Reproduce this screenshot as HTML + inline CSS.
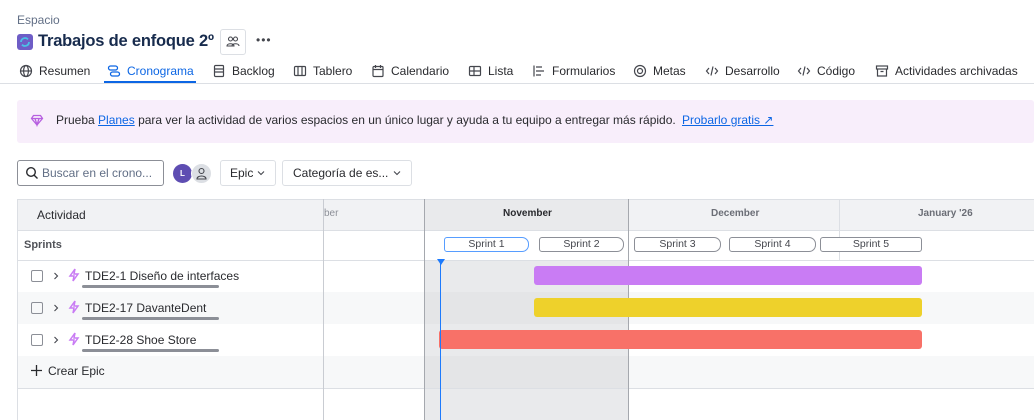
<!DOCTYPE html>
<html><head><meta charset="utf-8"><style>
*{box-sizing:border-box;margin:0;padding:0}
body{width:1034px;height:420px;overflow:hidden;background:#fff;font-family:"Liberation Sans",sans-serif;color:#292a2e;position:relative;font-size:12px}
.a{position:absolute}
.tab{position:absolute;top:64px;font-size:12px;color:#292a2e;display:flex;align-items:center;gap:6px;white-space:nowrap}
.tab svg{width:14px;height:14px}
.hl{position:absolute;left:17px;right:0;height:1px;background:#dcdfe4}
.vl{position:absolute;width:1px;background:#c9ccd2}
.sp{position:absolute;top:237px;height:15px;border:1px solid #8c8f97;border-radius:3px 7px 7px 3px;background:#fff;font-size:10.5px;text-align:center;line-height:13px;color:#44464d}
.row{position:absolute;left:17px;right:0;height:32px}
.cb{position:absolute;left:31px;width:12px;height:12px;border:1px solid #8c8f97;border-radius:2px}
.lab{position:absolute;left:85px;font-size:12px;color:#292a2e}
.ul{position:absolute;left:82px;width:137px;height:3px;background:#8c8f97;border-radius:2px}
.chev{position:absolute;left:52px}
.bolt{position:absolute;left:68px}
.bar{position:absolute;height:19px;border-radius:3px}
</style></head><body>
<div class="a" style="left:17px;top:13px;font-size:12px;color:#626f86">Espacio</div>
<div class="a" style="left:17px;top:34px;width:16px;height:16px;background:#6e5dc6;border-radius:3px"><svg width="16" height="16" viewBox="0 0 16 16"><path d="M4 8a4 4 0 0 1 7-2.6M12 8a4 4 0 0 1-7 2.6" stroke="#4bc0e6" stroke-width="1.8" fill="none"/></svg></div>
<div class="a" style="left:38px;top:32px;font-size:16.5px;font-weight:bold;color:#172b4d;letter-spacing:-0.2px">Trabajos de enfoque 2º</div>
<div class="a" style="left:220px;top:29px;width:26px;height:26px;border:1px solid #dcdfe4;border-radius:3px"><svg width="24" height="24" viewBox="0 0 24 24" fill="none" stroke="#44464d" stroke-width="1.1"><circle cx="9.5" cy="9" r="2"/><circle cx="14.5" cy="9" r="2"/><path d="M6 16c0-3 7-3 7 0zM11 16c0-3 7-3 7 0"/></svg></div>
<div class="a" style="left:256px;top:33px;font-size:12px;letter-spacing:1px;color:#44464d">•••</div>

<div class="tab" style="left:19px"><svg viewBox="0 0 14 14" fill="none" stroke="#44464d" stroke-width="1.2"><circle cx="7" cy="7" r="5.5"/><ellipse cx="7" cy="7" rx="2.4" ry="5.5"/><path d="M1.5 7h11"/></svg>Resumen</div>
<div class="tab" style="left:107px;color:#0c66e4"><svg viewBox="0 0 14 14" fill="none" stroke="#0c66e4" stroke-width="1.3"><rect x="1.5" y="2" width="9" height="4" rx="2"/><rect x="3.5" y="8" width="9" height="4" rx="2"/></svg>Cronograma</div>
<div class="a" style="left:104px;top:81px;width:92px;height:2px;background:#0c66e4"></div>
<div class="tab" style="left:212px"><svg viewBox="0 0 14 14" fill="none" stroke="#44464d" stroke-width="1.2"><rect x="2.5" y="1.5" width="9" height="11" rx="1"/><path d="M2.5 5h9M2.5 8h9"/></svg>Backlog</div>
<div class="tab" style="left:293px"><svg viewBox="0 0 14 14" fill="none" stroke="#44464d" stroke-width="1.2"><rect x="1.5" y="2.5" width="11" height="9" rx="1"/><path d="M5 2.5v9M9 2.5v9"/></svg>Tablero</div>
<div class="tab" style="left:371px"><svg viewBox="0 0 14 14" fill="none" stroke="#44464d" stroke-width="1.2"><rect x="2" y="2.5" width="10" height="10" rx="1"/><path d="M2 5.5h10M4.5 1v3M9.5 1v3"/></svg>Calendario</div>
<div class="tab" style="left:468px"><svg viewBox="0 0 14 14" fill="none" stroke="#44464d" stroke-width="1.2"><rect x="1.5" y="2.5" width="11" height="9" rx="1"/><path d="M1.5 7h11M6 2.5v9"/></svg>Lista</div>
<div class="tab" style="left:532px"><svg viewBox="0 0 14 14" fill="none" stroke="#44464d" stroke-width="1.2"><path d="M2 1.5v11M4 3h6M4 7h8M4 11h5"/></svg>Formularios</div>
<div class="tab" style="left:633px"><svg viewBox="0 0 14 14" fill="none" stroke="#44464d" stroke-width="1.2"><circle cx="7" cy="7" r="5.5"/><circle cx="7" cy="7" r="2.5"/></svg>Metas</div>
<div class="tab" style="left:705px"><svg viewBox="0 0 14 14" fill="none" stroke="#44464d" stroke-width="1.2"><path d="M4 4L1.5 7 4 10M10 4l2.5 3L10 10M8 2.5L6 11.5"/></svg>Desarrollo</div>
<div class="tab" style="left:797px"><svg viewBox="0 0 14 14" fill="none" stroke="#44464d" stroke-width="1.2"><path d="M4 4L1.5 7 4 10M10 4l2.5 3L10 10M8 2.5L6 11.5"/></svg>Código</div>
<div class="tab" style="left:875px"><svg viewBox="0 0 14 14" fill="none" stroke="#44464d" stroke-width="1.2"><rect x="1.5" y="2" width="11" height="3"/><path d="M2.5 5v7h9V5M5.5 7.5h3"/></svg>Actividades archivadas</div>
<div class="a" style="left:0;right:0;top:83px;height:1px;background:#dcdfe4"></div>

<div class="a" style="left:17px;top:100px;width:1017px;height:43px;background:#f8eefb;border-radius:3px"></div>
<div class="a" style="left:30px;top:113px"><svg width="14" height="14" viewBox="0 0 14 14" fill="none" stroke="#b760e0" stroke-width="1.3"><path d="M3.5 2.5h7l2 3L7 12 1.5 5.5z"/><path d="M1.5 5.5h11M5 5.5L7 12l2-6.5"/></svg></div>
<div class="a" style="left:56px;top:113px;font-size:12px;color:#292a2e">Prueba <span style="color:#0c66e4;text-decoration:underline">Planes</span> para ver la actividad de varios espacios en un único lugar y ayuda a tu equipo a entregar más rápido.</div>
<div class="a" style="left:682px;top:113px;font-size:12px;color:#0c66e4;text-decoration:underline">Probarlo gratis ↗</div>

<div class="a" style="left:17px;top:160px;width:147px;height:26px;border:1px solid #8c8f97;border-radius:3px"></div>
<div class="a" style="left:25px;top:166px"><svg width="14" height="14" viewBox="0 0 14 14" fill="none" stroke="#292a2e" stroke-width="1.4"><circle cx="6" cy="6" r="4.3"/><path d="M9.2 9.2L12.5 12.5"/></svg></div>
<div class="a" style="left:42px;top:166px;font-size:12px;color:#626f86">Buscar en el crono...</div>
<div class="a" style="left:173px;top:164px;width:19px;height:19px;border-radius:50%;background:#5e4db2;color:#fff;font-size:8px;text-align:center;line-height:19px;font-weight:bold">L</div>
<div class="a" style="left:191px;top:163px;width:21px;height:21px;border-radius:50%;background:#dcdfe4;border:1px solid #fff"><svg width="19" height="19" viewBox="0 0 19 19" fill="none" stroke="#44464d" stroke-width="1.1"><circle cx="9.5" cy="7" r="2.5"/><path d="M5 15c0-4 9-4 9 0z"/></svg></div>
<div class="a" style="left:220px;top:160px;width:56px;height:26px;border:1px solid #dcdfe4;border-radius:3px;font-size:12px;padding:5px 0 0 9px">Epic</div>
<svg class="a" style="left:256px;top:169px" width="10" height="8" viewBox="0 0 10 8" fill="none" stroke="#44464d" stroke-width="1.1"><path d="M2 2.5l3 3 3-3"/></svg>
<div class="a" style="left:282px;top:160px;width:130px;height:26px;border:1px solid #dcdfe4;border-radius:3px;font-size:12px;padding:5px 0 0 10px">Categoría de es...</div>
<svg class="a" style="left:392px;top:169px" width="10" height="8" viewBox="0 0 10 8" fill="none" stroke="#44464d" stroke-width="1.1"><path d="M2 2.5l3 3 3-3"/></svg>

<!-- grid -->
<div class="a" style="left:17px;top:199px;width:1017px;height:31px;background:#f1f2f4"></div>
<div class="a" style="left:424px;top:199px;width:204px;height:221px;background:#e9eaec"></div>
<div class="a" style="left:424px;top:230px;width:204px;height:30px;background:#fff"></div>
<div class="a" style="left:424px;top:292px;width:204px;height:32px;background:#e4e5e7"></div>
<div class="row" style="top:292px;background:#f7f8f9;width:407px"></div>
<div class="row" style="top:292px;left:628px;background:#f7f8f9"></div>
<div class="row" style="top:356px;background:#f7f8f9;width:407px"></div>
<div class="row" style="top:356px;left:628px;background:#f7f8f9"></div>
<div class="a" style="left:424px;top:356px;width:204px;height:32px;background:#e4e5e7"></div>
<div class="hl" style="top:199px"></div>
<div class="hl" style="top:230px"></div>
<div class="hl" style="top:260px"></div>
<div class="hl" style="top:388px"></div>
<div class="vl" style="left:17px;top:199px;height:221px;background:#dcdfe4"></div>
<div class="vl" style="left:323px;top:199px;height:221px"></div>
<div class="vl" style="left:424px;top:199px;height:221px;background:#a5a8ae"></div>
<div class="vl" style="left:628px;top:199px;height:221px;background:#a5a8ae"></div>
<div class="vl" style="left:839px;top:199px;height:61px;background:#dcdfe4"></div>
<div class="a" style="left:37px;top:208px;font-size:12px">Actividad</div>
<div class="a" style="left:324px;top:208px;font-size:10px;color:#8c8f97">ber</div>
<div class="a" style="left:503px;top:208px;font-size:10px;font-weight:bold;color:#292a2e">November</div>
<div class="a" style="left:711px;top:208px;font-size:10px;font-weight:bold;color:#6b6e76">December</div>
<div class="a" style="left:918px;top:208px;font-size:10px;font-weight:bold;color:#6b6e76">January '26</div>
<div class="a" style="left:24px;top:239px;font-size:11px;font-weight:bold;color:#505258">Sprints</div>
<div class="sp" style="left:444px;width:85px;border-color:#579dff">Sprint 1</div>
<div class="sp" style="left:539px;width:85px">Sprint 2</div>
<div class="sp" style="left:634px;width:87px">Sprint 3</div>
<div class="sp" style="left:729px;width:87px">Sprint 4</div>
<div class="sp" style="left:820px;width:102px;border-radius:3px">Sprint 5</div>

<div class="cb" style="top:270px"></div><svg class="chev" style="top:271px" width="8" height="10" viewBox="0 0 8 10" fill="none" stroke="#44464d" stroke-width="1.1"><path d="M2.5 2l3 3-3 3"/></svg>
<svg class="bolt" style="top:268px" width="12" height="14" viewBox="0 0 12 14" fill="none" stroke="#c97cf4" stroke-width="1.5"><path d="M7 1L2 8h4l-1 5 5-7H6z"/></svg>
<div class="lab" style="top:269px">TDE2-1 Diseño de interfaces</div><div class="ul" style="top:285px"></div>
<div class="cb" style="top:302px"></div><svg class="chev" style="top:303px" width="8" height="10" viewBox="0 0 8 10" fill="none" stroke="#44464d" stroke-width="1.1"><path d="M2.5 2l3 3-3 3"/></svg>
<svg class="bolt" style="top:300px" width="12" height="14" viewBox="0 0 12 14" fill="none" stroke="#c97cf4" stroke-width="1.5"><path d="M7 1L2 8h4l-1 5 5-7H6z"/></svg>
<div class="lab" style="top:301px">TDE2-17 DavanteDent</div><div class="ul" style="top:317px"></div>
<div class="cb" style="top:334px"></div><svg class="chev" style="top:335px" width="8" height="10" viewBox="0 0 8 10" fill="none" stroke="#44464d" stroke-width="1.1"><path d="M2.5 2l3 3-3 3"/></svg>
<svg class="bolt" style="top:332px" width="12" height="14" viewBox="0 0 12 14" fill="none" stroke="#c97cf4" stroke-width="1.5"><path d="M7 1L2 8h4l-1 5 5-7H6z"/></svg>
<div class="lab" style="top:333px">TDE2-28 Shoe Store</div><div class="ul" style="top:349px"></div>
<svg class="a" style="left:30px;top:364px" width="13" height="13" viewBox="0 0 13 13" stroke="#292a2e" stroke-width="1.3"><path d="M6.5 1v11M1 6.5h11"/></svg>
<div class="a" style="left:48px;top:364px;font-size:12px">Crear Epic</div>

<div class="bar" style="left:534px;top:266px;width:388px;background:#c97cf4"></div>
<div class="bar" style="left:534px;top:298px;width:388px;background:#eed12b"></div>
<div class="bar" style="left:439px;top:330px;width:483px;background:#f87168"></div>
<div class="a" style="left:440px;top:262px;width:1px;height:158px;background:#1d7afc"></div>
<div class="a" style="left:437px;top:259px;width:0;height:0;border-left:4px solid transparent;border-right:4px solid transparent;border-top:6px solid #1d7afc"></div>
</body></html>
